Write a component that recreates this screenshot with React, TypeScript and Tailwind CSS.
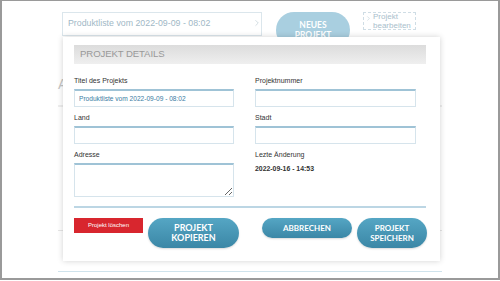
import { ChevronRight } from "lucide-react";

const FIELD_LABEL = "h-[11px] text-[7px] leading-[11px] text-[#333]";
const FIELD_INPUT =
  "w-full border border-[#d6e4ec] border-t-[#9fc3d6] border-t-2 bg-white px-[4px] text-[6.6px] text-[#3b7ca3] outline-none";
const PILL =
  "rounded-full bg-gradient-to-b from-[#55a6c4] to-[#3b87a6] font-['Lato',sans-serif] font-bold uppercase leading-[10px] text-white shadow-[0_1px_2px_rgba(0,0,0,0.15)]";

function Field({
  label,
  value = "",
}: {
  label: string;
  value?: string;
}) {
  return (
    <div className="flex flex-col">
      <div className={FIELD_LABEL}>{label}</div>
      <input readOnly value={value} className={`mt-[3px] h-[18px] ${FIELD_INPUT}`} />
    </div>
  );
}

export default function App() {
  return (
    <div className="relative h-[280px] w-[500px] overflow-hidden border-2 border-t border-[#9a9a9a] bg-white font-['Liberation_Sans',Arial,sans-serif]">
      {/* page behind the dialog */}
      <div className="flex flex-col pl-[60px] pt-[11px]">
        <div className="flex items-start">
          <div className="flex h-[24px] w-[200px] items-center border border-[#dbe6ec] px-[5px] text-[8.8px] text-[#9fb8c6]">
            Produktliste vom 2022-09-09 - 08:02
          </div>
          <ChevronRight className="-ml-[10px] mt-[6px] h-[10px] w-[10px] text-[#b8c8d0]" strokeWidth={1.5} />
          <div className="ml-[14px] flex h-[36px] w-[74px] flex-col items-center justify-center rounded-full bg-[#a9cfe0] font-['Lato',sans-serif] text-[8.5px] font-bold leading-[10px] text-white">
            <span>NEUES</span>
            <span>PROJEKT</span>
          </div>
          <div className="ml-[13px] flex h-[18px] w-[53px] items-start border border-dashed border-[#cfdde5] pl-[1px] text-[8px] leading-[8.5px] text-[#a9c0cc]">
            <ChevronRight className="mt-[2px] h-[7px] w-[7px] shrink-0" strokeWidth={1.5} />
            <span className="ml-[1px] text-left">
              Projekt
              <br />
              bearbeiten
            </span>
          </div>
        </div>
        <div className="ml-[-4px] mt-[26px] text-[14px] text-[#c4c4c4]">A</div>
        <div className="ml-[-4px] mt-[10px] h-[2px] w-[384px] bg-[#eeeeee]" />
        <div className="ml-[-4px] mt-[123px] h-px w-[384px] bg-[#e6e6e6]" />
        <div className="ml-[-4px] mt-[40px] h-px w-[384px] bg-[#cfe3ec]" />
      </div>

      {/* dialog */}
      <div className="absolute left-[61px] top-[36px] flex h-[224px] w-[377px] flex-col bg-white px-[11px] pt-[8px] shadow-[0_0_6px_rgba(0,0,0,0.18)]">
        <div className="flex h-[19px] w-[352px] items-center bg-gradient-to-b from-[#dcdcdc] to-[#efefef] pl-[6px] text-[9.6px] tracking-[-0.1px] text-[#999]">
          PROJEKT DETAILS
        </div>

        <div className="mt-[11px] grid grid-cols-[160px_161px] gap-x-[21px] gap-y-[5px]">
          <Field label="Titel des Projekts" value="Produktliste vom 2022-09-09 - 08:02" />
          <Field label="Projektnummer" />
          <Field label="Land" />
          <Field label="Stadt" />
          <div className="flex flex-col">
            <div className={FIELD_LABEL}>Adresse</div>
            <textarea readOnly className={`mt-[3px] h-[34px] resize-y ${FIELD_INPUT}`} />
          </div>
          <div className="flex flex-col">
            <div className={FIELD_LABEL}>Lezte Änderung</div>
            <div className="mt-[4px] text-[6.9px] font-bold leading-[10px] text-[#333]">
              2022-09-16 - 14:53
            </div>
          </div>
        </div>

        <div className="mt-[9px] h-[2px] w-[352px] bg-[#bcd6e4]" />

        <div className="mt-[10px] flex items-start">
          <button className="h-[15px] w-[69px] bg-[#d8262e] text-[6px] text-white">
            Projekt löschen
          </button>
          <button className={`ml-[5px] h-[30px] w-[91px] text-[9px] ${PILL}`}>
            Projekt
            <br />
            kopieren
          </button>
          <button className={`ml-[23px] h-[20px] w-[90px] text-[8px] ${PILL}`}>
            Abbrechen
          </button>
          <button className={`ml-[5px] h-[30px] w-[70px] text-[8px] ${PILL}`}>
            Projekt
            <br />
            speichern
          </button>
        </div>
      </div>
    </div>
  );
}
